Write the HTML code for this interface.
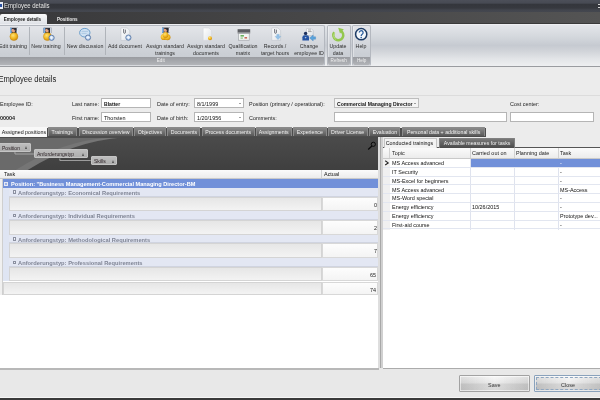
<!DOCTYPE html>
<html><head><meta charset="utf-8">
<style>
*{margin:0;padding:0;box-sizing:border-box}
html,body{width:600px;height:400px;overflow:hidden;background:#ececec;font-family:"Liberation Sans",sans-serif;font-size:5.5px;color:#222}
#w{position:absolute;left:0;top:0;width:600px;height:400px;overflow:hidden;will-change:transform;opacity:.999;filter:blur(.35px)}
.a{position:absolute;white-space:nowrap}
i{display:inline-block;font-style:normal;transform:scale(0.99,1.03)}
i.tc{transform-origin:50% 50%} i.tl{transform-origin:0 50%} i.tr{transform-origin:100% 50%}
#title{left:0;top:0;width:600px;height:12px;background:linear-gradient(#4c4f59 0,#474a53 26%,#34363c 36%,#36383e 66%,#42454d 84%,#44474f 100%)}
#title span{position:absolute;left:4px;top:1.4px;font-size:7.4px;line-height:10px;color:#e8e8e8}
#title span i{transform:scale(.81,1.05)}
#tline{left:0;top:11.5px;width:600px;height:1px;background:#a4a6aa}
#tabbar{left:0;top:12px;width:600px;height:12px;background:linear-gradient(90deg,#38383a,#545454);border-bottom:.6px solid #3a3a3a}
#tab1{left:0;top:14px;width:47px;height:10px;background:linear-gradient(#fafafa,#dfe2e7);border-radius:2px 2px 0 0;font-weight:bold;line-height:10.6px;text-align:center;color:#222;padding-right:3.6px}
#tab1 i{transform:scale(.83,1.1)}
#tab2{left:57px;top:14px;font-weight:bold;line-height:10px;color:#eee}
#tab2 i{transform:scale(.83,1.1)}
#ribbon{left:0;top:24px;width:600px;height:43px;background:linear-gradient(#e4e6ea 0%,#d4d8dd 28%,#c6cad1 50%,#d1d4d9 64%,#e2e4e7 82%,#eeeff1 100%);border-bottom:1px solid #9a9ca0;border-top:1px solid #eeeff2}
.grp{top:25px;height:40.5px;border:1px solid #b4b8bf;border-bottom-color:#d8dade;border-radius:2px;background:linear-gradient(#e3e5e9 0%,#d7dadf 35%,#cbcfd5 70%,#c7cbd1 100%);box-shadow:inset .6px 0 0 rgba(255,255,255,.6)}
.glab{position:absolute;left:0;right:0;bottom:0;height:7.3px;background:linear-gradient(#999ba0,#b2b4b8);border-radius:0 0 2px 2px;color:#f0f0f0;line-height:7.3px;text-align:center}
.rb i{transform:scale(.96,1.03)}
.glab i{transform:scale(.84,1.08)}
.rb{top:42.8px;line-height:6.8px;text-align:center;color:#2c2c2c;transform:translateX(-50%)}
.sep{top:27px;width:1px;height:28px;background:#b0b4ba}
.ico{top:28px;width:14px;height:14px}
h1{position:absolute;left:-1.6px;top:73.6px;font-size:7.6px;line-height:11px;font-weight:normal;color:#222}
h1 i{transform:scale(1,1.08)}
#hline{left:0;top:95px;width:600px;height:1px;background:#dcdcdc}
.lbl{color:#222;line-height:9px;margin-top:1px}
.inp[style*=bold] i{transform:scale(.93,1.03)}
.inp{height:10px;background:#fff;border:1px solid #b5b5b5;line-height:11.2px;padding-left:2px;color:#111}
.otab.in{background:linear-gradient(#787878,#4a4a4a);border-color:#808080}
.otab i{transform:scale(.95,1.03)}
.otab{top:127px;height:9.2px;background:linear-gradient(#8a8a8a,#585858);border:.5px solid #8a8a8a;border-bottom:0;color:#f2f2f2;line-height:8.5px;text-align:center;border-radius:1px 1px 0 0}
.otab.act{background:#f0f0f0;color:#111;height:10.2px;border-color:#f8f8f8;background:#f8f8f8;padding-right:2px}
.otab.act i{transform:scale(.97,1.03)}
.chip i{transform:scale(.92,1.03)}
#dark{left:0;top:137px;width:379px;height:33px;background:linear-gradient(#3a3a3a,#4c4c4c);overflow:hidden}
.chip{height:8.8px;background:linear-gradient(#bdbdbd,#adadad);border:.6px solid #c4c4c4;border-radius:1px;line-height:9px;color:#2a2024;padding-left:1.5px}
.chip b{position:absolute;right:2.6px;top:2.4px;width:0;height:0;border:1.9px solid transparent;border-top:0;border-bottom:3px solid #505050}
.hdr{background:linear-gradient(#fbfbfb,#ececec);border-bottom:1px solid #c9c9c9;line-height:9px;color:#111}
.pm{position:absolute;width:3.6px;height:3.6px;border:.6px solid #8b90a0;background:linear-gradient(#fff,#d8dcea)}
.grow i{transform:scale(1.045,1.06)}
.posrow i{transform:scale(1.02,1.12)}
.grow{left:9px;width:369px;height:8.9px;background:#e3e7f3;font-weight:bold;color:#7f8494;line-height:10.6px;border-bottom:1px solid #d0d4e0}
.drow{left:9px;width:313px;height:14.5px;background:linear-gradient(#e6e6e6,#f3f3f3);border:1px solid #d4d4d4}
.dval{left:322px;width:55.6px;height:14.5px;background:linear-gradient(#fdfdfd,#f4f4f4);border:1px solid #d8d8d8;line-height:14px;text-align:right;padding-right:0;color:#222}
.rrow{left:383px;width:217px;height:8.8px;border-bottom:1px solid #e2e6f0;line-height:9.4px;color:#111}
.rrow span{position:absolute;top:0}
.btn{top:374.5px;height:17.5px;border:1px solid #a2a2a2;border-radius:1px;background:linear-gradient(90deg,rgba(0,0,0,.09),rgba(255,255,255,.25) 50%,rgba(0,0,0,.09)),linear-gradient(#f7f7f7 0%,#e6e6e6 45%,#d2d2d2 55%,#cdcdcd 100%);box-shadow:inset 0 0 0 .7px rgba(255,255,255,.8);line-height:18.5px;text-align:center;color:#333}
</style></head><body>
<div id="w">
<div class="a" id="title"><div class="a" style="left:0;top:2px;width:3px;height:7px;background:#e8ecf4"></div><div class="a" style="left:0;top:4px;width:2px;height:3px;background:#2a50a0"></div><span><i class="tl">Employee details</i></span><div class="a" style="left:598.4px;top:4.2px;width:2px;height:1.3px;background:#d8d8d8"></div><div class="a" style="left:598.4px;top:6.8px;width:2px;height:1.3px;background:#d8d8d8"></div></div>
<div class="a" id="tline"></div><div class="a" id="tabbar"></div>
<div class="a" id="tab1"><i class="tc">Employee details</i></div>
<div class="a" id="tab2"><i class="tl">Positions</i></div>
<div class="a" id="ribbon"></div>
<div class="a grp" style="left:-3px;width:328px"><div class="glab"><i class="tc">Edit</i></div></div>
<div class="a grp" style="left:327px;width:24px"><div class="glab"><i class="tc">Refresh</i></div></div>
<div class="a grp" style="left:352px;width:19px"><div class="glab"><i class="tc">Help</i></div></div>
<div class="a sep" style="left:29px"></div>
<div class="a sep" style="left:64px"></div>
<div class="a sep" style="left:105px"></div>
<div class="a rb" style="left:13px"><i class="tc">Edit training</i></div>
<div class="a rb" style="left:46px"><i class="tc">New training</i></div>
<div class="a rb" style="left:85px"><i class="tc">New discussion</i></div>
<div class="a rb" style="left:125px"><i class="tc">Add document</i></div>
<div class="a rb" style="left:165px"><i class="tc">Assign standard<br>trainings</i></div>
<div class="a rb" style="left:206px"><i class="tc">Assign standard<br>documents</i></div>
<div class="a rb" style="left:243px"><i class="tc">Qualification<br>matrix</i></div>
<div class="a rb" style="left:275px"><i class="tc">Records /<br>target hours</i></div>
<div class="a rb" style="left:309px"><i class="tc">Change<br>employee ID</i></div>
<div class="a rb" style="left:338px"><i class="tc">Update<br>data</i></div>
<div class="a rb" style="left:361px"><i class="tc">Help</i></div>
<svg class="a" style="left:0;top:24px;width:400px;height:42px" viewBox="0 24 400 42">
<defs>
<radialGradient id="gold" cx=".4" cy=".35" r=".7"><stop offset="0" stop-color="#fde27a"/><stop offset=".55" stop-color="#f2b822"/><stop offset="1" stop-color="#c8860a"/></radialGradient>
<radialGradient id="badge" cx=".4" cy=".35" r=".8"><stop offset="0" stop-color="#d8e6f8"/><stop offset="1" stop-color="#94b6e4"/></radialGradient>
<linearGradient id="page" x2="1" y2="1"><stop offset="0" stop-color="#ffffff"/><stop offset="1" stop-color="#dfe3e8"/></linearGradient>
<g id="person"><rect x="0" y="0" width="8" height="5.2" fill="#2b2b33"/><rect x="0" y="0" width="1.7" height="5.2" fill="#7ab0e8"/><rect x="6.5" y="0" width="1.5" height="5.2" fill="#dfe8f4"/><circle cx="3.5" cy="2.5" r="1.9" fill="#e6a484"/><path d="M2.6 .4h3.8v2.4h-1.6a2 2 0 0 0-2.2-1.6z" fill="#2b2b33"/></g>
<g id="plus"><circle r="2.6" fill="url(#badge)" stroke="#5f7ca6" stroke-width=".9"/><path d="M-1.6 0h3.2M0-1.6v3.2" stroke="#f2f6fc" stroke-width=".9"/></g>
</defs>
<!-- Edit training -->
<use href="#person" x="10" y="27.8"/><circle cx="13.9" cy="36.6" r="4" fill="url(#gold)" stroke="#b97a08" stroke-width=".4"/>
<!-- New training -->
<use href="#person" x="43.6" y="27.8"/><circle cx="47.4" cy="36.6" r="4" fill="url(#gold)" stroke="#b97a08" stroke-width=".4"/><use href="#plus" x="51.6" y="37.8"/>
<!-- New discussion -->
<ellipse cx="84.8" cy="32.7" rx="5.2" ry="4.3" fill="#cfe1f2" stroke="#6c9fcc" stroke-width="1"/><path d="M81.6 31.4h6.4M81.6 33.4h5" stroke="#9fc0de" stroke-width=".7"/><use href="#plus" x="88" y="37.6"/>
<!-- Add document -->
<path d="M121 28h6.2l2.6 2.6v9.8H121z" fill="url(#page)" stroke="#b9bec6" stroke-width=".5"/><path d="M123.6 29v3.4a.9.9 0 0 0 1.8 0V29.6" fill="none" stroke="#3c404a" stroke-width=".7"/><use href="#plus" x="128.4" y="37.6"/>
<!-- Assign standard trainings -->
<use href="#person" x="162" y="27.6"/><circle cx="163.8" cy="37" r="3.1" fill="url(#gold)"/><circle cx="167.5" cy="37.2" r="3" fill="url(#gold)"/><circle cx="165.5" cy="35" r="2.9" fill="url(#gold)"/>
<!-- Assign standard documents -->
<path d="M203.2 28h5.8l2.6 2.6v9.8h-8.4z" fill="url(#page)" stroke="#d0d3d8" stroke-width=".5"/><circle cx="210" cy="38.2" r="2" fill="url(#gold)"/>
<!-- Qualification matrix -->
<rect x="237.6" y="29.2" width="12.6" height="3.4" fill="#5c5e62"/><rect x="237.6" y="32.6" width="12.6" height="1" fill="#8a8c90"/><rect x="238.6" y="33.6" width="10.6" height="6.6" fill="#f2f5f2" stroke="#9a9da2" stroke-width=".6"/><rect x="240.5" y="35" width="3.4" height="1.6" fill="#67b05c"/><rect x="244.5" y="37" width="2.6" height="1.6" fill="#c86a5a"/><rect x="240.5" y="37.4" width="2.4" height="1.4" fill="#9cc890"/>
<!-- Records -->
<path d="M271.8 28h6.2l2.6 2.6v9.8h-8.8z" fill="url(#page)" stroke="#b9bec6" stroke-width=".5"/><path d="M274.6 29v3.4a.9.9 0 0 0 1.8 0V29.6" fill="none" stroke="#3c404a" stroke-width=".7"/><path d="M276.8 34.4h2.4v2h1.6l-2.8 3.2-2.8-3.2h1.6z" fill="#94c2e8" stroke="#6a9fce" stroke-width=".3"/>
<!-- Change employee ID -->
<path d="M306.6 28.6h4.6l2 2v5h-6.6z" fill="url(#page)" stroke="#aab0ba" stroke-width=".5"/><path d="M308 30h3M308 31.6h3.6" stroke="#555" stroke-width=".5"/><circle cx="305.6" cy="33.4" r="1.7" fill="#1c2f5c"/><path d="M302.4 40.6v-3.4a2 2 0 0 1 2-2h2.6a2 2 0 0 1 2 2v3.4z" fill="#2554a4"/><path d="M304.6 37.2l1 1.4 1-1.4" fill="#e8eef8"/><path d="M309.6 38l3.6-3v1.8h2.4v2.4h-2.4V41z" fill="#5aa4dc" stroke="#3a78b4" stroke-width=".3"/>
<!-- Update -->
<path d="M334.2 32.2a5 5 0 1 0 6.2-1.6" fill="none" stroke="#93c74e" stroke-width="2.5"/><path d="M338.2 27.8l5.6 1.4-3.8 4.2z" fill="#93c74e"/><path d="M334.6 33a4.4 4.4 0 0 0 1.2 6.4" fill="none" stroke="#bfe08c" stroke-width=".9"/>
<!-- Help -->
<circle cx="361.2" cy="34.2" r="5.6" fill="#f3f7fb" stroke="#1f3d66" stroke-width="1.5"/><path d="M359.3 32.6a1.9 1.9 0 1 1 2.9 1.6c-.7.5-1 .8-1 1.7" fill="none" stroke="#2c5f9e" stroke-width="1.3"/><circle cx="361.2" cy="37.6" r=".8" fill="#2c5f9e"/>
</svg>

<h1><i class="tl">Employee details</i></h1><div class="a" id="hline"></div>
<div class="a lbl" style="left:0px;top:99px;"><i class="tl">Employee ID:</i></div>
<div class="a lbl" style="left:0px;top:113px;font-weight:bold"><i class="tl">00004</i></div>
<div class="a lbl" style="left:72px;top:99px;"><i class="tl">Last name:</i></div>
<div class="a lbl" style="left:72px;top:113px;"><i class="tl">First name:</i></div>
<div class="a inp" style="left:101px;top:98px;width:50px;font-weight:bold"><i class="tl">Blatter</i></div>
<div class="a inp" style="left:101px;top:112px;width:50px;"><i class="tl">Thorsten</i></div>
<div class="a lbl" style="left:157px;top:99px;"><i class="tl">Date of entry:</i></div>
<div class="a lbl" style="left:157px;top:113px;"><i class="tl">Date of birth:</i></div>
<div class="a inp" style="left:194px;top:98px;width:50px;"><i class="tl">8/1/1999</i><span style="position:absolute;right:2.4px;top:3.6px;width:0;height:0;border:1.2px solid transparent;border-bottom:0;border-top:1.6px solid #444"></span></div>
<div class="a inp" style="left:194px;top:112px;width:50px;"><i class="tl">1/20/1956</i><span style="position:absolute;right:2.4px;top:3.6px;width:0;height:0;border:1.2px solid transparent;border-bottom:0;border-top:1.6px solid #444"></span></div>
<div class="a lbl" style="left:248.8px;top:99px;"><i class="tl">Position (primary / operational):</i></div>
<div class="a lbl" style="left:248.8px;top:113px;"><i class="tl">Comments:</i></div>
<div class="a inp" style="left:334px;top:98px;width:85px;background:#f4f4f4;font-weight:bold;border-color:#bdbdbd"><i class="tl">Commercial Managing Director</i><span style="position:absolute;right:2.4px;top:3.6px;width:0;height:0;border:1.2px solid transparent;border-bottom:0;border-top:1.6px solid #444"></span></div>
<div class="a inp" style="left:334px;top:112px;width:173px;"></div>
<div class="a lbl" style="left:510px;top:99px;"><i class="tl">Cost center:</i></div>
<div class="a inp" style="left:510px;top:112px;width:84px;"></div>
<div class="a" style="left:47px;top:127.6px;width:438.5px;height:9.4px;background:#4c4c4c"></div>
<div class="a otab act" style="left:0.0px;width:46.8px"><i class="tc">Assigned positions</i></div>
<div class="a otab" style="left:47.8px;width:29.7px"><i class="tc">Trainings</i></div>
<div class="a otab" style="left:78.5px;width:54.0px"><i class="tc">Discussion overview</i></div>
<div class="a otab" style="left:133.5px;width:32.3px"><i class="tc">Objectives</i></div>
<div class="a otab" style="left:166.8px;width:33.7px"><i class="tc">Documents</i></div>
<div class="a otab" style="left:201.5px;width:53.3px"><i class="tc">Process documents</i></div>
<div class="a otab" style="left:255.8px;width:36.0px"><i class="tc">Assignments</i></div>
<div class="a otab" style="left:292.8px;width:34.0px"><i class="tc">Experience</i></div>
<div class="a otab" style="left:327.8px;width:40.0px"><i class="tc">Driver License</i></div>
<div class="a otab" style="left:368.8px;width:31.7px"><i class="tc">Evaluation</i></div>
<div class="a otab" style="left:401.5px;width:83.5px"><i class="tc">Personal data + additional skills</i></div>
<svg class="a" style="left:0;top:136.5px;width:378px;height:33px" viewBox="0 136.5 379 33" preserveAspectRatio="none"><defs><linearGradient id="dg" x2="0" y2="1"><stop offset="0" stop-color="#4b4b4b"/><stop offset="1" stop-color="#3f3f3f"/></linearGradient></defs><rect y="136" width="379" height="34" fill="url(#dg)"/><path d="M0 137H122Q73 141 27 170H0Z" fill="#757575"/><path d="M0 137H110Q62 140 15 170H0Z" fill="#6a6a6a"/><rect y="136" width="379" height="1.4" fill="#4a4a4a"/><path d="M15 151.5V153.5H34M60 158V160H91" fill="none" stroke="#b4b4b4" stroke-width=".8"/></svg>
<div class="a chip" style="left:-1px;top:142.8px;width:32px"><i class="tl">Position</i><b></b></div>
<div class="a chip" style="left:34.3px;top:149.2px;width:53.3px"><i class="tl">Anforderungstyp</i><b></b></div>
<div class="a chip" style="left:91px;top:156.2px;width:26.4px"><i class="tl">Skills</i><b></b></div>
<svg class="a" style="left:364px;top:139px;width:14px;height:14px" viewBox="364 139 14 14"><circle cx="373.3" cy="144.3" r="2.1" fill="none" stroke="#0a0a0a" stroke-width="1"/><path d="M371.9 146L368.2 149.4" stroke="#0a0a0a" stroke-width="1.3"/></svg>
<div class="a" style="left:0;top:169.5px;width:378px;height:198.5px;background:#fff"></div>
<div class="a hdr" style="left:0;top:170px;width:322px;height:9px;padding-left:4px;border-right:1px solid #d0d0d0"><i class="tl">Task</i></div>
<div class="a hdr" style="left:322px;top:170px;width:56px;height:9px;padding-left:2px"><i class="tl">Actual</i></div>
<div class="a" style="left:0;top:179px;width:3px;height:116px;background:#f0f0f0;border-right:1px solid #cfcfcf"></div>
<div class="a" style="left:3px;top:188px;width:6px;height:93px;background:#dfe5f3"></div>
<div class="a posrow" style="left:3px;top:179px;width:375px;height:8.7px;background:#7190d9;color:#fff;font-weight:bold;line-height:10.2px;padding-left:7.8px"><span style="position:absolute;left:1.4px;top:3.4px;width:3.6px;height:4px;border:.8px solid #e4e8f4;background:#9ab0e6"></span><i class="tl">Position: "Business Management-Commercial Managing Director-BM</i></div>
<div class="a grow" style="top:187.7px;padding-left:9.2px"><span class="pm" style="left:3.5px;top:2.7px"></span><i class="tl">Anforderungstyp: Economical Requirements</i></div>
<div class="a drow" style="top:196.6px"></div><div class="a dval" style="top:196.6px"><i class="tr">0</i></div>
<div class="a grow" style="top:211.1px;padding-left:9.2px"><span class="pm" style="left:3.5px;top:2.7px"></span><i class="tl">Anforderungstyp: Individual Requirements</i></div>
<div class="a drow" style="top:220.0px"></div><div class="a dval" style="top:220.0px"><i class="tr">2</i></div>
<div class="a grow" style="top:234.5px;padding-left:9.2px"><span class="pm" style="left:3.5px;top:2.7px"></span><i class="tl">Anforderungstyp: Methodological Requirements</i></div>
<div class="a drow" style="top:243.4px"></div><div class="a dval" style="top:243.4px"><i class="tr">7</i></div>
<div class="a grow" style="top:257.9px;padding-left:9.2px"><span class="pm" style="left:3.5px;top:2.7px"></span><i class="tl">Anforderungstyp: Professional Requirements</i></div>
<div class="a drow" style="top:266.8px"></div><div class="a dval" style="top:266.8px"><i class="tr">65</i></div>
<div class="a drow" style="top:281.8px;left:3px;width:319px;height:13.5px"></div><div class="a dval" style="top:281.8px;height:13.5px"><i class="tr">74</i></div>
<div class="a" style="left:378px;top:137px;width:5px;height:231px;background:linear-gradient(90deg,#dedede 0,#dedede 1.7px,#a8a8a8 1.7px,#a8a8a8 3px,#d0d0d0 3px)"></div>
<div class="a" style="left:382.8px;top:148px;width:217.2px;height:220px;background:#fff"></div>
<div class="a" style="left:383px;top:147px;width:217px;height:1px;background:#555"></div>
<div class="a otab act" style="left:384px;top:138px;width:53px;height:10px;border:1px solid #c4c4c4;border-bottom:0;background:#f3f3f3;line-height:8px"><i class="tc">Conducted trainings</i></div>
<div class="a otab in" style="left:439px;top:138px;width:76px;height:10px"><i class="tc">Available measures for tasks</i></div>
<div class="a hdr" style="left:383px;top:148px;width:217px;height:10.8px"></div>
<div class="a" style="left:389px;top:148px;width:1px;height:10px;background:#d2d2d2"></div><div class="a" style="left:389px;top:158.8px;width:1px;height:70.8px;background:#dfe3ee"></div>
<div class="a" style="left:470px;top:148px;width:1px;height:10px;background:#d2d2d2"></div><div class="a" style="left:470px;top:158.8px;width:1px;height:70.8px;background:#dfe3ee"></div>
<div class="a" style="left:514px;top:148px;width:1px;height:10px;background:#d2d2d2"></div><div class="a" style="left:514px;top:158.8px;width:1px;height:70.8px;background:#dfe3ee"></div>
<div class="a" style="left:558px;top:148px;width:1px;height:10px;background:#d2d2d2"></div><div class="a" style="left:558px;top:158.8px;width:1px;height:70.8px;background:#dfe3ee"></div>
<div class="a lbl" style="left:391.5px;top:148px;"><i class="tl">Topic</i></div>
<div class="a lbl" style="left:472px;top:148px;"><i class="tl">Carried out on</i></div>
<div class="a lbl" style="left:516px;top:148px;"><i class="tl">Planning date</i></div>
<div class="a lbl" style="left:560px;top:148px;"><i class="tl">Task</i></div>
<div class="a" style="left:383px;top:158.8px;width:6.5px;height:70.8px;background:#f0f0f0"></div>
<div class="a" style="left:471px;top:159.1px;width:129px;height:8.6px;background:#7190d9"></div>
<div class="a rrow" style="top:159.1px"><svg style="position:absolute;left:1px;top:1px;width:6px;height:6px" viewBox="0 0 6 6"><path d="M1.2 .8L4.2 2.9L1.2 5" fill="none" stroke="#222" stroke-width="1.1"/></svg><span style="left:8.5px"><i class="tl">MS Access advanced</i></span><span style="left:177px;color:#fff"><i class="tl">-</i></span></div>
<div class="a rrow" style="top:167.9px"><span style="left:8.5px"><i class="tl">IT Security</i></span><span style="left:177px;"><i class="tl">-</i></span></div>
<div class="a rrow" style="top:176.7px"><span style="left:8.5px"><i class="tl">MS-Excel for beginners</i></span><span style="left:177px;"><i class="tl">-</i></span></div>
<div class="a rrow" style="top:185.5px"><span style="left:8.5px"><i class="tl">MS Access advanced</i></span><span style="left:177px;"><i class="tl">MS-Access</i></span></div>
<div class="a rrow" style="top:194.3px"><span style="left:8.5px"><i class="tl">MS-Word special</i></span><span style="left:177px;"><i class="tl">-</i></span></div>
<div class="a rrow" style="top:203.1px"><span style="left:8.5px"><i class="tl">Energy efficiency</i></span><span style="left:89px"><i class="tl">10/26/2015</i></span><span style="left:177px;"><i class="tl">-</i></span></div>
<div class="a rrow" style="top:211.9px"><span style="left:8.5px"><i class="tl">Energy efficiency</i></span><span style="left:177px;"><i class="tl">Prototype dev...</i></span></div>
<div class="a rrow" style="top:220.7px"><span style="left:8.5px"><i class="tl">First-aid course</i></span><span style="left:177px;"><i class="tl">-</i></span></div>
<div class="a" style="left:0;top:368px;width:600px;height:30px;background:#e8e8e8"></div><div class="a" style="left:0;top:368.4px;width:379px;height:1.2px;background:#b8b8b8"></div><div class="a" style="left:382.5px;top:367.6px;width:218px;height:1.2px;background:#ababab"></div>
<div class="a btn" style="left:459px;width:71px"><i class="tc">Save</i></div>
<div class="a btn" style="left:533.5px;width:70px;border-color:#8aa2bc"><i class="tc">Close</i><div class="a" style="left:1px;top:1px;right:1px;bottom:1px;border:.7px dashed #8fa6c0"></div></div>
<div class="a" style="left:0;top:396.6px;width:600px;height:1.2px;background:#f6f6f6"></div><div class="a" style="left:0;top:397.7px;width:600px;height:3px;background:#3a3a3a"></div>
</div>
</body></html>
